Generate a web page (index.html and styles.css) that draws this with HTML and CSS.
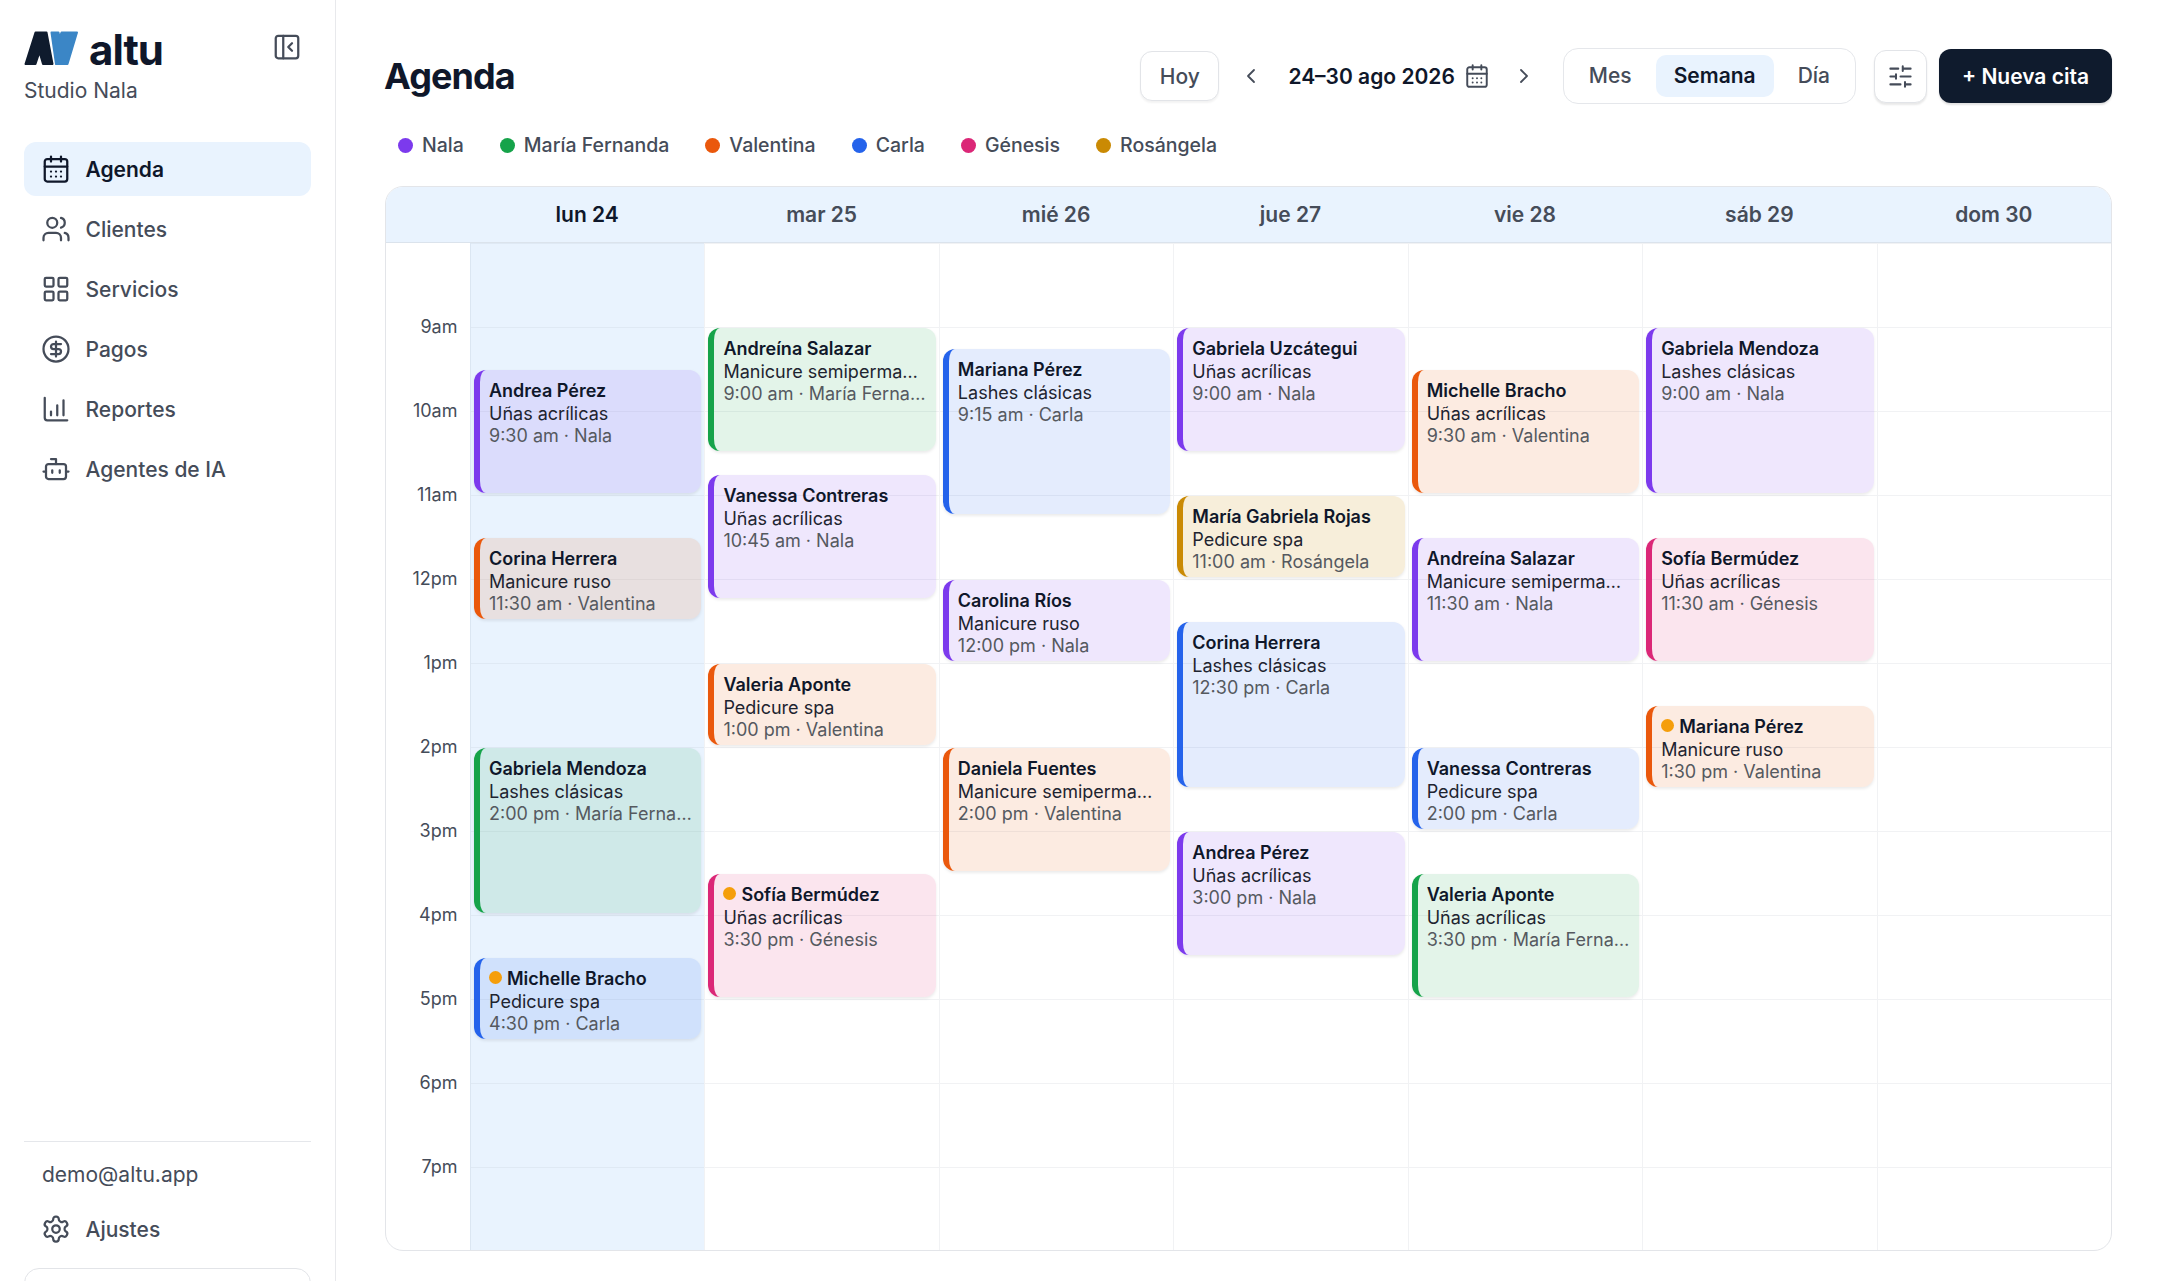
FILE: index.html
```html
<!DOCTYPE html>
<html lang="es">

<head>
    <meta charset="UTF-8">
    <meta name="viewport" content="width=device-width, initial-scale=1.0">
    <title>Agenda - altu</title>
    <link rel="stylesheet" href="styles.css">
</head>

<body>
    <aside class="sidebar">
        <div class="brand">
            <div class="logo-row">
                <svg class="logo-mark" viewBox="0 0 56 35">
                    <path class="logo-dark" d="M11.5 1.5h11l6 31.5h-9.5l-3.5-12-4 12H1.5z"/>
                    <path class="logo-blue" d="M27.5 1.5h7l1 5 2-5h15.5l-9.500 31.500h-11.500z"/>
                </svg>
                <span class="logo-text">altu</span>
            </div>
            <svg class="collapse-icon" viewBox="0 0 24 24"><rect x="3" y="3" width="18" height="18" rx="2"/><path d="M9 3v18M16 15l-3-3 3-3"/></svg>
        </div>
        <div class="studio">Studio Nala</div>

        <nav class="side-nav">
            <a class="nav-item active">
                <svg viewBox="0 0 24 24"><rect x="3" y="4" width="18" height="18" rx="2"/><path d="M8 2v4M16 2v4M3 10h18M8 14h.01M12 14h.01M16 14h.01M8 18h.01M12 18h.01M16 18h.01"/></svg>
                Agenda
            </a>
            <a class="nav-item">
                <svg viewBox="0 0 24 24"><path d="M16 21v-2a4 4 0 0 0-4-4H6a4 4 0 0 0-4 4v2"/><circle cx="9" cy="7" r="4"/><path d="M22 21v-2a4 4 0 0 0-3-3.870M16 3.130a4 4 0 0 1 0 7.750"/></svg>
                Clientes
            </a>
            <a class="nav-item">
                <svg viewBox="0 0 24 24"><rect x="3" y="3" width="7" height="7" rx="1"/><rect x="14" y="3" width="7" height="7" rx="1"/><rect x="14" y="14" width="7" height="7" rx="1"/><rect x="3" y="14" width="7" height="7" rx="1"/></svg>
                Servicios
            </a>
            <a class="nav-item">
                <svg viewBox="0 0 24 24"><circle cx="12" cy="12" r="10"/><path d="M16 8h-6a2 2 0 1 0 0 4h4a2 2 0 1 1 0 4H8M12 18V6"/></svg>
                Pagos
            </a>
            <a class="nav-item">
                <svg viewBox="0 0 24 24"><path d="M3 3v16a2 2 0 0 0 2 2h16M8 17v-3M13 17V9M18 17V5"/></svg>
                Reportes
            </a>
            <a class="nav-item">
                <svg viewBox="0 0 24 24"><path d="M12 8V4H8"/><rect x="4" y="8" width="16" height="12" rx="2"/><path d="M2 14h2M20 14h2M15 13v2M9 13v2"/></svg>
                Agentes de IA
            </a>
        </nav>

        <div class="side-footer">
            <div class="user-email">demo@altu.app</div>
            <a class="nav-item">
                <svg viewBox="0 0 24 24"><path d="M12.220 2h-.440a2 2 0 0 0-2 2v.180a2 2 0 0 1-1 1.730l-.430.250a2 2 0 0 1-2 0l-.150-.080a2 2 0 0 0-2.730.730l-.220.380a2 2 0 0 0 .730 2.730l.150.100a2 2 0 0 1 1 1.720v.510a2 2 0 0 1-1 1.740l-.150.090a2 2 0 0 0-.730 2.730l.220.380a2 2 0 0 0 2.730.730l.150-.080a2 2 0 0 1 2 0l.430.250a2 2 0 0 1 1 1.730V20a2 2 0 0 0 2 2h.440a2 2 0 0 0 2-2v-.180a2 2 0 0 1 1-1.730l.430-.250a2 2 0 0 1 2 0l.150.080a2 2 0 0 0 2.730-.730l.220-.390a2 2 0 0 0-.730-2.730l-.150-.080a2 2 0 0 1-1-1.740v-.500a2 2 0 0 1 1-1.740l.150-.090a2 2 0 0 0 .730-2.730l-.220-.380a2 2 0 0 0-2.730-.730l-.150.080a2 2 0 0 1-2 0l-.430-.250a2 2 0 0 1-1-1.730V4a2 2 0 0 0-2-2z"/><circle cx="12" cy="12" r="3"/></svg>
                Ajustes
            </a>
            <div class="logout-box"></div>
        </div>
    </aside>

    <main class="main">
        <header class="topbar">
            <h1>Agenda</h1>
            <div class="controls">
                <button class="btn-today">Hoy</button>
                <div class="date-nav">
                    <svg class="chev" viewBox="0 0 24 24"><path d="m15 18-6-6 6-6"/></svg>
                    <span class="date-label">24–30 ago 2026</span>
                    <svg class="cal-icon" viewBox="0 0 24 24"><rect x="3" y="4" width="18" height="18" rx="2"/><path d="M8 2v4M16 2v4M3 10h18M8 14h.01M12 14h.01M16 14h.01M8 18h.01M12 18h.01M16 18h.01"/></svg>
                    <svg class="chev" viewBox="0 0 24 24"><path d="m9 18 6-6-6-6"/></svg>
                </div>
                <div class="view-switch">
                    <span>Mes</span>
                    <span class="selected">Semana</span>
                    <span>Día</span>
                </div>
                <button class="btn-filter">
                    <svg viewBox="0 0 24 24"><path d="M10 5H3M12 19H3M14 3v4M16 17v4M21 12h-9M21 19h-5M21 5h-7M8 10v4M8 12H3"/></svg>
                </button>
                <button class="btn-new">+ Nueva cita</button>
            </div>
        </header>

        <div class="legend">
            <span class="legend-item"><i class="dot nala"></i>Nala</span>
            <span class="legend-item"><i class="dot maria"></i>María Fernanda</span>
            <span class="legend-item"><i class="dot valentina"></i>Valentina</span>
            <span class="legend-item"><i class="dot carla"></i>Carla</span>
            <span class="legend-item"><i class="dot genesis"></i>Génesis</span>
            <span class="legend-item"><i class="dot rosangela"></i>Rosángela</span>
        </div>

        <section class="calendar">
            <div class="cal-head">
                <div class="head-spacer"></div>
                <div class="head-day today">lun 24</div>
                <div class="head-day">mar 25</div>
                <div class="head-day">mié 26</div>
                <div class="head-day">jue 27</div>
                <div class="head-day">vie 28</div>
                <div class="head-day">sáb 29</div>
                <div class="head-day">dom 30</div>
            </div>
            <div class="cal-body">
                <div class="hours">
                    <span></span><span>9am</span><span>10am</span><span>11am</span><span>12pm</span><span>1pm</span><span>2pm</span><span>3pm</span><span>4pm</span><span>5pm</span><span>6pm</span><span>7pm</span>
                </div>

                <!-- each day has 48 rows of 15 minutes, 8am is row 1 -->
                <div class="day today">
                    <div class="event nala" style="grid-row: 7 / span 6"><b>Andrea Pérez</b><p>Uñas acrílicas</p><small>9:30 am · Nala</small></div>
                    <div class="event valentina" style="grid-row: 15 / span 4"><b>Corina Herrera</b><p>Manicure ruso</p><small>11:30 am · Valentina</small></div>
                    <div class="event maria" style="grid-row: 25 / span 8"><b>Gabriela Mendoza</b><p>Lashes clásicas</p><small>2:00 pm · María Fernanda</small></div>
                    <div class="event carla" style="grid-row: 35 / span 4"><b><i class="pending"></i>Michelle Bracho</b><p>Pedicure spa</p><small>4:30 pm · Carla</small></div>
                </div>
                <div class="day">
                    <div class="event maria" style="grid-row: 5 / span 6"><b>Andreína Salazar</b><p>Manicure semipermanente</p><small>9:00 am · María Fernanda</small></div>
                    <div class="event nala" style="grid-row: 12 / span 6"><b>Vanessa Contreras</b><p>Uñas acrílicas</p><small>10:45 am · Nala</small></div>
                    <div class="event valentina" style="grid-row: 21 / span 4"><b>Valeria Aponte</b><p>Pedicure spa</p><small>1:00 pm · Valentina</small></div>
                    <div class="event genesis" style="grid-row: 31 / span 6"><b><i class="pending"></i>Sofía Bermúdez</b><p>Uñas acrílicas</p><small>3:30 pm · Génesis</small></div>
                </div>
                <div class="day">
                    <div class="event carla" style="grid-row: 6 / span 8"><b>Mariana Pérez</b><p>Lashes clásicas</p><small>9:15 am · Carla</small></div>
                    <div class="event nala" style="grid-row: 17 / span 4"><b>Carolina Ríos</b><p>Manicure ruso</p><small>12:00 pm · Nala</small></div>
                    <div class="event valentina" style="grid-row: 25 / span 6"><b>Daniela Fuentes</b><p>Manicure semipermanente</p><small>2:00 pm · Valentina</small></div>
                </div>
                <div class="day">
                    <div class="event nala" style="grid-row: 5 / span 6"><b>Gabriela Uzcátegui</b><p>Uñas acrílicas</p><small>9:00 am · Nala</small></div>
                    <div class="event rosangela" style="grid-row: 13 / span 4"><b>María Gabriela Rojas</b><p>Pedicure spa</p><small>11:00 am · Rosángela</small></div>
                    <div class="event carla" style="grid-row: 19 / span 8"><b>Corina Herrera</b><p>Lashes clásicas</p><small>12:30 pm · Carla</small></div>
                    <div class="event nala" style="grid-row: 29 / span 6"><b>Andrea Pérez</b><p>Uñas acrílicas</p><small>3:00 pm · Nala</small></div>
                </div>
                <div class="day">
                    <div class="event valentina" style="grid-row: 7 / span 6"><b>Michelle Bracho</b><p>Uñas acrílicas</p><small>9:30 am · Valentina</small></div>
                    <div class="event nala" style="grid-row: 15 / span 6"><b>Andreína Salazar</b><p>Manicure semipermanente</p><small>11:30 am · Nala</small></div>
                    <div class="event carla" style="grid-row: 25 / span 4"><b>Vanessa Contreras</b><p>Pedicure spa</p><small>2:00 pm · Carla</small></div>
                    <div class="event maria" style="grid-row: 31 / span 6"><b>Valeria Aponte</b><p>Uñas acrílicas</p><small>3:30 pm · María Fernanda</small></div>
                </div>
                <div class="day">
                    <div class="event nala" style="grid-row: 5 / span 8"><b>Gabriela Mendoza</b><p>Lashes clásicas</p><small>9:00 am · Nala</small></div>
                    <div class="event genesis" style="grid-row: 15 / span 6"><b>Sofía Bermúdez</b><p>Uñas acrílicas</p><small>11:30 am · Génesis</small></div>
                    <div class="event valentina" style="grid-row: 23 / span 4"><b><i class="pending"></i>Mariana Pérez</b><p>Manicure ruso</p><small>1:30 pm · Valentina</small></div>
                </div>
                <div class="day"></div>
            </div>
        </section>
    </main>
</body>

</html>
```

FILE: styles.css
```css
* {
    box-sizing: border-box;
}

body {
    margin: 0;
    height: 100vh;
    overflow: hidden;
    display: flex;
    background: white;
    color: #0f172a;
    font-family: Inter, "Noto Sans", sans-serif;
}

svg {
    fill: none;
    stroke: currentColor;
    stroke-width: 1.8;
    stroke-linecap: round;
    stroke-linejoin: round;
    flex: none;
}

/* sidebar */

.sidebar {
    width: 336px;
    flex: none;
    height: 100vh;
    overflow: hidden;
    padding: 30px 24px 0;
    border-right: 1px solid #e8e9ec;
    color: #454c59;
}

.brand {
    display: flex;
    align-items: flex-start;
    justify-content: space-between;
    padding-right: 9px;
}

.logo-row {
    display: flex;
    align-items: center;
    gap: 9px;
    height: 36px;
}

.logo-mark {
    width: 56px;
    height: 35px;
    stroke-width: 2;
}

.logo-dark {
    fill: #0f1b2d;
    stroke: #0f1b2d;
}

.logo-blue {
    fill: #3b86c6;
    stroke: #3b86c6;
}

.logo-text {
    font-size: 42px;
    font-weight: 700;
    line-height: 36px;
    margin-top: 3px;
    color: #0f172a;
    letter-spacing: -1px;
}

.collapse-icon {
    width: 30px;
    height: 30px;
    margin-top: 2px;
}

.studio {
    margin-top: 10px;
    font-size: 21px;
    line-height: 30px;
}

.side-nav {
    margin-top: 36px;
    height: 999px;
    display: flex;
    flex-direction: column;
    gap: 6px;
}

.nav-item {
    display: flex;
    align-items: center;
    gap: 15px;
    height: 54px;
    padding: 0 16.5px;
    border-radius: 12px;
    font-size: 21px;
    font-weight: 500;
}

.nav-item svg {
    width: 30px;
    height: 30px;
}

.nav-item.active {
    background: #e9f3fe;
    color: #0f172a;
    font-weight: 600;
}

.side-footer {
    border-top: 1.5px solid #e5e7eb;
    padding-top: 18px;
}

.user-email {
    padding: 0 18px;
    font-size: 21px;
    line-height: 30px;
    margin-bottom: 12px;
}

.logout-box {
    height: 60px;
    margin-top: 12px;
    border: 1.5px solid #e2e4e8;
    border-radius: 15px;
}

/* main */

.main {
    flex: 1;
    min-width: 0;
    padding: 22px 48px 30px 49px;
    display: flex;
    flex-direction: column;
}

.topbar {
    display: flex;
    align-items: center;
    justify-content: space-between;
    height: 108px;
}

h1 {
    margin: 0 0 0 -1px;
    font-size: 36px;
    font-weight: 700;
    letter-spacing: -0.9px;
}

.controls {
    display: flex;
    align-items: center;
}

button {
    font-family: inherit;
    font-size: 21px;
    font-weight: 500;
    cursor: pointer;
}

.btn-today {
    width: 79px;
    height: 50px;
    padding: 0;
    background: white;
    color: #454c59;
    border: 1.5px solid #e2e4e8;
    border-radius: 12px;
    box-shadow: 0 1.5px 2px rgba(0, 0, 0, 0.05);
}

.date-nav {
    display: flex;
    align-items: center;
    margin-left: 20px;
    color: #0f172a;
}

.chev {
    width: 24px;
    height: 24px;
    color: #454c59;
}

.date-label {
    margin-left: 25px;
    font-size: 21px;
    font-weight: 600;
}

.cal-icon {
    width: 26px;
    height: 26px;
    margin: 0 21.5px 0 9.5px;
    color: #454c59;
}

.view-switch {
    display: flex;
    align-items: center;
    margin-left: 27px;
    height: 56px;
    padding: 0 7px;
    gap: 6px;
    border: 1.5px solid #e5e7eb;
    border-radius: 15px;
    font-size: 21px;
    font-weight: 500;
    color: #454c59;
}

.view-switch span {
    padding: 0 18px;
    line-height: 42px;
    border-radius: 10px;
}

.view-switch .selected {
    background: #e9f3fe;
    color: #0f172a;
    font-weight: 600;
}

.btn-filter {
    width: 53px;
    height: 53px;
    margin-left: 18px;
    padding: 0;
    display: flex;
    align-items: center;
    justify-content: center;
    background: white;
    color: #454c59;
    border: 1.5px solid #e2e4e8;
    border-radius: 12px;
    box-shadow: 0 2px 2px rgba(0, 0, 0, 0.09);
}

.btn-filter svg {
    width: 27px;
    height: 27px;
}

.btn-new {
    width: 173px;
    height: 54px;
    margin-left: 12px;
    background: #0f1b2d;
    color: white;
    border: none;
    border-radius: 12px;
    font-weight: 600;
    box-shadow: 0 1.5px 2px rgba(0, 0, 0, 0.12);
}

.legend {
    display: flex;
    gap: 36px;
    height: 56px;
    padding-left: 13px;
    align-items: flex-start;
    font-size: 19.5px;
    font-weight: 500;
    color: #454c59;
}

.legend-item {
    display: flex;
    align-items: center;
    gap: 9px;
    line-height: 30px;
}

.dot {
    width: 15px;
    height: 15px;
    border-radius: 50%;
    background: var(--c);
}

.nala { --c: #7c3aed; }
.maria { --c: #16a34a; }
.valentina { --c: #ea580c; }
.carla { --c: #2563eb; }
.genesis { --c: #db2777; }
.rosangela { --c: #ca8a04; }

/* calendar */

.calendar {
    flex: 1;
    min-height: 0;
    border: 1px solid #e3e5e9;
    border-radius: 18px;
    overflow: hidden;
}

.cal-head,
.cal-body {
    display: grid;
    grid-template-columns: 84px repeat(7, 1fr);
}

.cal-head {
    height: 56px;
    background: #e9f3fe;
    border-bottom: 1.5px solid #dbe3ec;
}

.head-day {
    display: flex;
    align-items: center;
    justify-content: center;
    font-size: 21px;
    font-weight: 600;
    color: #454c59;
}

.head-day.today {
    color: #0f172a;
}

.hours {
    display: grid;
    grid-template-rows: repeat(12, 84px);
}

.hours span {
    font-size: 18px;
    line-height: 24px;
    margin-top: -12px;
    padding-right: 12.5px;
    text-align: right;
    color: #454c59;
}

.day {
    display: grid;
    grid-template-rows: repeat(48, 21px);
    grid-template-columns: minmax(0, 1fr);
    border-left: 1px solid #f1f2f4;
    background-image: linear-gradient(#f1f2f4 1.5px, transparent 1.5px);
    background-size: 100% 84px;
}

.day.today {
    background-color: #e9f3fe;
    background-image: linear-gradient(#dfe9f4 1.5px, transparent 1.5px);
    border-left-color: #dbe6f2;
}

.event {
    margin: 1px 3px 2px 3px;
    padding: 10px 9px 0 9px;
    border-left: 6px solid var(--c);
    border-radius: 12px;
    background: color-mix(in srgb, var(--c) 12%, transparent);
    box-shadow: 0 1.5px 3px rgba(0, 0, 0, 0.08);
    overflow: hidden;
    font-size: 18px;
    line-height: 22.5px;
}

.event.rosangela {
    background: color-mix(in srgb, var(--c) 15%, transparent);
}

.event b,
.event p,
.event small {
    display: block;
    margin: 0;
    white-space: nowrap;
    overflow: hidden;
    text-overflow: ellipsis;
    font-size: 18px;
}

.event b {
    font-weight: 600;
    color: #0f172a;
}

.event p {
    color: #1e2430;
}

.event small {
    color: #55595f;
}

.pending {
    display: inline-block;
    width: 13px;
    height: 13px;
    margin-right: 5px;
    border-radius: 50%;
    background: #f59e0b;
    vertical-align: 1px;
}
```
